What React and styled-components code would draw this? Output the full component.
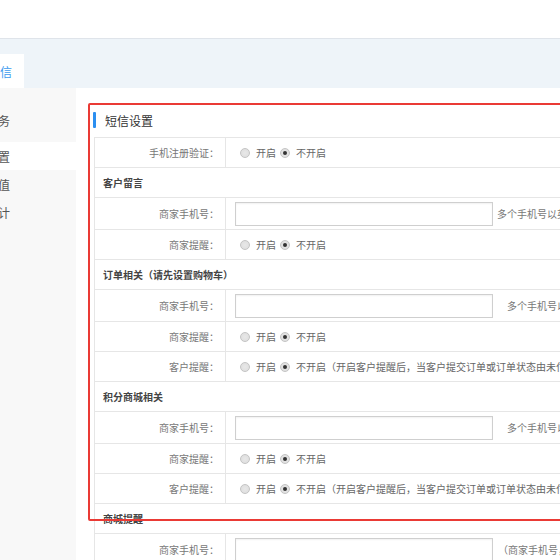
import React from "react";
import styled, { createGlobalStyle } from "styled-components";

const Global = createGlobalStyle`
  html, body { margin: 0; padding: 0; background: #fff; }
  body {
    width: 560px; height: 560px; overflow: hidden;
    font-family: "Noto Sans CJK SC", "Noto Sans", sans-serif;
  }
  * { box-sizing: border-box; }
`;

const Page = styled.div`
  position: relative;
  margin-left: -60px;
  width: 800px;
`;

const TopBar = styled.div`
  height: 39px;
  background: #fff;
  border-bottom: 1px solid #dfe4ea;
`;

const TabBand = styled.div`
  height: 49px;
  background: #eef4f9;
  display: flex;
  align-items: flex-end;
  padding-left: 36px;
`;

const Tab = styled.div`
  height: 34px;
  background: #fff;
  padding: 0 12px;
  display: flex;
  align-items: center;
  font-size: 12px;
  color: #3d9bef;
`;

const Body = styled.div`
  display: flex;
`;

const Sidebar = styled.div`
  width: 136px;
  flex: none;
  background: #f8f8f8;
  min-height: 480px;
`;

const SideItem = styled.div`
  height: ${(p) => (p.$head ? 54 : 28)}px;
  padding-top: ${(p) => (p.$head ? 10 : 0)}px;
  padding-left: 22px;
  display: flex;
  align-items: center;
  font-size: 12px;
  color: #555;
  background: ${(p) => (p.$active ? "#fff" : "transparent")};
`;

const Content = styled.div`
  flex: 1;
  padding: 24px 0 0 18px;
`;

const Title = styled.div`
  display: flex;
  align-items: center;
  height: 16px;
  margin-left: -1px;
  margin-bottom: 9px;
  font-size: 12px;
  color: #333;
  &::before {
    content: "";
    width: 3px;
    height: 16px;
    border-radius: 1px;
    background: #2b8ff0;
    margin-right: 9px;
  }
`;

const Table = styled.div`
  width: 700px;
  border-left: 1px solid #e6e6e6;
  border-top: 1px solid #e6e6e6;
`;

const Row = styled.div`
  display: grid;
  grid-template-columns: 131px 1fr;
  height: ${(p) => (p.$input ? 32 : 30)}px;
  border-bottom: 1px solid #e6e6e6;
`;

const Label = styled.div`
  border-right: 1px solid #e6e6e6;
  display: flex;
  align-items: center;
  justify-content: flex-end;
  padding-right: 6px;
  font-size: 10px;
  color: #777;
  white-space: nowrap;
`;

const Value = styled.div`
  display: flex;
  align-items: center;
  padding-left: 9px;
  font-size: 10px;
  color: #666;
  white-space: nowrap;
`;

const Section = styled.div`
  height: 30px;
  border-bottom: 1px solid #e6e6e6;
  display: flex;
  align-items: center;
  padding-left: 8px;
  font-size: 10px;
  font-weight: 700;
  color: #444;
`;

const Input = styled.div`
  width: 258px;
  height: 24px;
  border: 1px solid #cfcfcf;
  box-shadow: inset 0 1px 2px rgba(0, 0, 0, 0.06);
  background: #fff;
`;

const Hint = styled.span`
  margin-left: ${(p) => p.$offset || 4}px;
  font-size: 10px;
  color: #777;
`;

const Radio = styled.span`
  width: 10px;
  height: 10px;
  border-radius: 50%;
  border: 1px solid #c4c4c4;
  background: radial-gradient(circle, #e8e8e8 0, #dcdcdc 100%);
  margin-left: ${(p) => (p.$first ? 5 : 4)}px;
  margin-right: 6px;
  display: inline-flex;
  align-items: center;
  justify-content: center;
  &::after {
    content: "";
    width: 4px;
    height: 4px;
    border-radius: 50%;
    background: ${(p) => (p.$on ? "#333" : "transparent")};
  }
`;

const Annotation = styled.div`
  position: absolute;
  left: 148px;
  top: 103px;
  width: 700px;
  height: 418px;
  border: 2px solid #ea3a35;
  border-radius: 2px;
  pointer-events: none;
`;

const Toggle = ({ extra }) => (
  <Value>
    <Radio $first />
    开启
    <Radio $on />
    不开启{extra}
  </Value>
);

const InputRow = ({ label, hint, offset }) => (
  <Row $input>
    <Label>{label}</Label>
    <Value>
      <Input />
      <Hint $offset={offset}>{hint}</Hint>
    </Value>
  </Row>
);

const ToggleRow = ({ label, extra }) => (
  <Row>
    <Label>{label}</Label>
    <Toggle extra={extra} />
  </Row>
);

const note = "（开启客户提醒后，当客户提交订单或订单状态由未付款变为已付款时发送短信）";

export default function App() {
  return (
    <>
      <Global />
      <Page>
        <TopBar />
        <TabBand>
          <Tab>短信</Tab>
        </TabBand>
        <Body>
          <Sidebar>
            <SideItem $head>短信服务</SideItem>
            <SideItem $active>短信设置</SideItem>
            <SideItem>短信充值</SideItem>
            <SideItem>短信统计</SideItem>
          </Sidebar>
          <Content>
            <Title>短信设置</Title>
            <Table>
              <ToggleRow label="手机注册验证：" />
              <Section>客户留言</Section>
              <InputRow label="商家手机号：" hint="多个手机号以英文逗号隔开" offset={4} />
              <ToggleRow label="商家提醒：" />
              <Section>订单相关（请先设置购物车）</Section>
              <InputRow label="商家手机号：" hint="多个手机号以英文逗号隔开" offset={14} />
              <ToggleRow label="商家提醒：" />
              <ToggleRow label="客户提醒：" extra={note} />
              <Section>积分商城相关</Section>
              <InputRow label="商家手机号：" hint="多个手机号以英文逗号隔开" offset={14} />
              <ToggleRow label="商家提醒：" />
              <ToggleRow label="客户提醒：" extra={note} />
              <Section>商城提醒</Section>
              <InputRow label="商家手机号：" hint="（商家手机号，多个以英文逗号隔开）" offset={5} />
            </Table>
          </Content>
        </Body>
        <Annotation />
      </Page>
    </>
  );
}
